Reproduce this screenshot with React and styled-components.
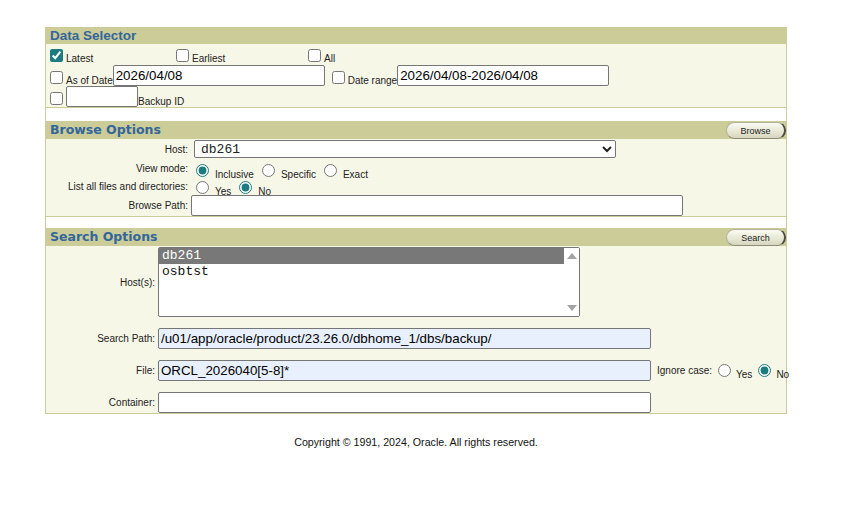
import React from "react";
import styled, { createGlobalStyle } from "styled-components";

const GlobalStyle = createGlobalStyle`
  body {
    margin: 0;
    background: #fff;
    font-family: "Liberation Sans", Arial, sans-serif;
  }
  input[type="checkbox"], input[type="radio"] {
    accent-color: #1b7b7e;
  }
`;

const Page = styled.div`
  padding: 27px 0 0 45px;
`;

const Frame = styled.div`
  width: 742px;
  box-sizing: border-box;
  border-left: 1px solid #cccc99;
  border-right: 1px solid #cccc99;
`;

const Section = styled.div`
  background: #f7f7e7;
  border-bottom: 1px solid #cccc99;
  margin-bottom: ${(p) => p.gap || 0}px;
`;

const Header = styled.div`
  display: flex;
  align-items: center;
  justify-content: space-between;
  height: ${(p) => p.h || 18}px;
  background: #cccc99;
  padding-left: 4px;
`;

const Title = styled.div`
  color: #336699;
  font-family: ${(p) => (p.heavy ? '"DejaVu Sans", Verdana, sans-serif' : '"Liberation Sans", Arial, sans-serif')};
  font-weight: bold;
  font-size: ${(p) => (p.heavy ? "12.5px" : "13.5px")};
  line-height: 18px;
`;

const PillButton = styled.button`
  width: 60px;
  height: 17px;
  margin: 1px 0 0 0;
  padding: 0;
  border: 1px solid #b4b49c;
  border-right: 2px solid #4a4a40;
  border-bottom: 1px solid #8c8c78;
  border-radius: 9px;
  background: linear-gradient(#fbfbf3, #e6e6d2 60%, #d6d6bf);
  font-family: "Liberation Sans", Tahoma, sans-serif;
  font-size: 9px;
  color: #222;
  align-self: flex-start;
`;

const Small = styled.span`
  font-size: 10px;
  color: #222;
  white-space: nowrap;
  flex-shrink: 0;
`;

const DataBody = styled.div`
  padding: 1px 0 0 0;
  height: 62px;
`;

const ChoiceRow = styled.div`
  display: grid;
  grid-template-columns: 126px 132px 1fr;
  height: 19px;
`;

const FlowRow = styled.div`
  display: flex;
  align-items: flex-end;
  height: ${(p) => p.h || 22}px;
`;

const Inline = styled.label`
  display: inline-flex;
  align-items: flex-end;
  white-space: nowrap;
  input[type="checkbox"] {
    margin: 3px 3px 2px 4px;
    width: 13px;
    height: 13px;
  }
`;

const TextInput = styled.input`
  box-sizing: border-box;
  flex-shrink: 0;
  width: ${(p) => p.w}px;
  height: 21px;
  margin: 0 ${(p) => p.mr || 0}px 0 0;
  padding: 0 2px;
  border: 1px solid #767676;
  border-radius: 2px;
  background: ${(p) => (p.filled ? "#e8f0fe" : "#fff")};
  font-family: "Liberation Sans", Arial, sans-serif;
  font-size: 13.33px;
  color: #000;
  outline: none;
`;

const FormGrid = styled.div`
  display: grid;
  grid-template-columns: ${(p) => p.label}px 1fr;
`;

const FieldLabel = styled.div`
  display: flex;
  align-items: ${(p) => p.align || "center"};
  justify-content: flex-end;
  padding-right: 3px;
  font-size: 10px;
  color: #222;
  white-space: nowrap;
  height: ${(p) => p.h}px;
  padding-top: ${(p) => p.pt || 0}px;
`;

const LowText = styled.span`
  margin-bottom: ${(p) => p.mb}px;
`;

const Field = styled.div`
  display: flex;
  align-items: ${(p) => p.align || "center"};
  height: ${(p) => p.h}px;
  padding-top: ${(p) => p.pt || 0}px;
  white-space: nowrap;
`;

const Select = styled.select`
  box-sizing: border-box;
  width: 422px;
  height: 18px;
  margin-left: 3px;
  padding: 0 2px;
  border: 1px solid #767676;
  border-radius: 2px;
  background: #fff;
  font-family: "Liberation Mono", "Courier New", monospace;
  font-size: 13px;
  color: #222;
`;

const RadioGroup = styled.div`
  display: flex;
  align-items: flex-end;
  flex-shrink: 0;
  input[type="radio"] {
    width: 13px;
    height: 13px;
    margin: 0 3px 1px ${(p) => p.lead ?? 5}px;
  }
`;

const RadioText = styled.span`
  font-size: 10px;
  color: #222;
  margin: 0 ${(p) => p.mr ?? 4}px -2px ${(p) => p.ml ?? 3}px;
`;

const ListBox = styled.div`
  display: flex;
  box-sizing: border-box;
  width: 422px;
  height: 70px;
  border: 1px solid #767676;
  border-radius: 2px;
  background: #fff;
`;

const Options = styled.div`
  flex: 1;
`;

const Option = styled.div`
  height: 16px;
  line-height: 16px;
  padding-left: 3px;
  font-family: "Liberation Mono", "Courier New", monospace;
  font-size: 13px;
  background: ${(p) => (p.selected ? "#787878" : "transparent")};
  color: ${(p) => (p.selected ? "#fff" : "#111")};
`;

const ScrollTrack = styled.div`
  width: 15px;
  display: flex;
  flex-direction: column;
  justify-content: space-between;
  align-items: center;
  padding: 5px 0;
  background: #fff;
`;

const Arrow = styled.div`
  width: 0;
  height: 0;
  border-left: 5px solid transparent;
  border-right: 5px solid transparent;
  ${(p) => (p.down ? "border-top: 6px solid #a3a3a3;" : "border-bottom: 6px solid #a3a3a3;")}
`;

const Footer = styled.div`
  width: 742px;
  padding-top: 22px;
  text-align: center;
  font-size: 10.67px;
  color: #111;
`;

export default function App() {
  return (
    <>
      <GlobalStyle />
      <Page>
        <Frame>
          <Section gap={13}>
            <Header h={17}>
              <Title>Data Selector</Title>
            </Header>
            <DataBody>
              <ChoiceRow>
                <Inline>
                  <input type="checkbox" defaultChecked />
                  <Small>Latest</Small>
                </Inline>
                <Inline>
                  <input type="checkbox" />
                  <Small>Earliest</Small>
                </Inline>
                <Inline>
                  <input type="checkbox" />
                  <Small>All</Small>
                </Inline>
              </ChoiceRow>
              <FlowRow h={22}>
                <Inline>
                  <input type="checkbox" />
                  <Small>As of Date</Small>
                </Inline>
                <TextInput w={212} mr={3} defaultValue="2026/04/08" />
                <Inline>
                  <input type="checkbox" />
                  <Small>Date range</Small>
                </Inline>
                <TextInput w={212} defaultValue="2026/04/08-2026/04/08" />
              </FlowRow>
              <FlowRow h={21}>
                <Inline>
                  <input type="checkbox" />
                </Inline>
                <TextInput w={72} />
                <Small>Backup ID</Small>
              </FlowRow>
            </DataBody>
          </Section>

          <Section gap={11}>
            <Header>
              <Title heavy>Browse Options</Title>
              <PillButton>Browse</PillButton>
            </Header>
            <FormGrid label={145}>
              <FieldLabel h={20}>Host:</FieldLabel>
              <Field h={20}>
                <Select defaultValue="db261">
                  <option>db261</option>
                  <option>osbtst</option>
                </Select>
              </Field>

              <FieldLabel h={19} align="flex-end">
                <LowText mb={4}>View mode:</LowText>
              </FieldLabel>
              <Field h={19} align="flex-end">
                <RadioGroup>
                  <input type="radio" name="vm" defaultChecked />
                  <RadioText mr={3}>Inclusive</RadioText>
                  <input type="radio" name="vm" />
                  <RadioText mr={3}>Specific</RadioText>
                  <input type="radio" name="vm" />
                  <RadioText>Exact</RadioText>
                </RadioGroup>
              </Field>

              <FieldLabel h={17} align="flex-end">
                <LowText mb={3}>List all files and directories:</LowText>
              </FieldLabel>
              <Field h={17} align="flex-end">
                <RadioGroup>
                  <input type="radio" name="la" />
                  <RadioText mr={3}>Yes</RadioText>
                  <input type="radio" name="la" defaultChecked />
                  <RadioText>No</RadioText>
                </RadioGroup>
              </Field>

              <FieldLabel h={21}>Browse Path:</FieldLabel>
              <Field h={21}>
                <TextInput w={492} />
              </Field>
            </FormGrid>
          </Section>

          <Section>
            <Header>
              <Title heavy>Search Options</Title>
              <PillButton>Search</PillButton>
            </Header>
            <FormGrid label={112}>
              <FieldLabel h={70} pt={1}>Host(s):</FieldLabel>
              <Field h={70} pt={1}>
                <ListBox>
                  <Options>
                    <Option selected>db261</Option>
                    <Option>osbtst</Option>
                  </Options>
                  <ScrollTrack>
                    <Arrow />
                    <Arrow down />
                  </ScrollTrack>
                </ListBox>
              </Field>

              <FieldLabel h={21} pt={11}>Search Path:</FieldLabel>
              <Field h={21} pt={11}>
                <TextInput w={493} filled defaultValue="/u01/app/oracle/product/23.26.0/dbhome_1/dbs/backup/" />
              </Field>

              <FieldLabel h={21} pt={11}>File:</FieldLabel>
              <Field h={21} pt={11}>
                <TextInput w={493} mr={6} filled defaultValue="ORCL_2026040[5-8]*" />
                <Small>Ignore case:</Small>
                <RadioGroup lead={6}>
                  <input type="radio" name="ic" />
                  <RadioText ml={2} mr={0}>Yes</RadioText>
                  <input type="radio" name="ic" defaultChecked />
                  <RadioText ml={2} mr={0}>No</RadioText>
                </RadioGroup>
              </Field>

              <FieldLabel h={21} pt={11}>Container:</FieldLabel>
              <Field h={21} pt={11}>
                <TextInput w={493} />
              </Field>
            </FormGrid>
          </Section>
        </Frame>
        <Footer>Copyright © 1991, 2024, Oracle. All rights reserved.</Footer>
      </Page>
    </>
  );
}
